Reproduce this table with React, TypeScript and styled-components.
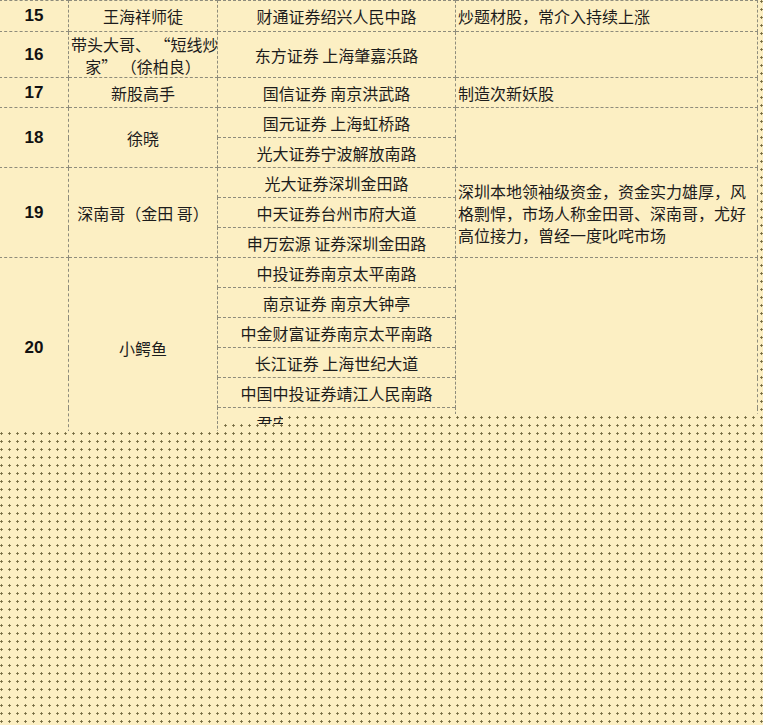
import styled, { createGlobalStyle } from "styled-components";

const cream = "#fcefc3";
const dots = `radial-gradient(circle at 1.5px 1.5px, #6f653c 0.9px, transparent 1.4px)`;

const GlobalStyle = createGlobalStyle`
  html, body {
    margin: 0;
    padding: 0;
  }
  body {
    background-color: ${cream};
    background-image: ${dots};
    background-size: 8px 8px;
    font-family: "Noto Sans CJK SC", "Noto Sans", sans-serif;
    color: #1c1c1c;
  }
`;

type Entry = {
  no: string;
  name: React.ReactNode;
  brokers: string[];
  note?: React.ReactNode;
  heights: number[];
};

const entries: Entry[] = [
  {
    no: "15",
    name: "王海祥师徒",
    brokers: ["财通证券绍兴人民中路"],
    note: "炒题材股，常介入持续上涨",
    heights: [31],
  },
  {
    no: "16",
    name: (
      <>
        带头大哥、 “短线炒
        <br />
        家” （徐柏良）
      </>
    ),
    brokers: ["东方证券 上海肇嘉浜路"],
    heights: [46],
  },
  {
    no: "17",
    name: "新股高手",
    brokers: ["国信证券 南京洪武路"],
    note: "制造次新妖股",
    heights: [30],
  },
  {
    no: "18",
    name: "徐晓",
    brokers: ["国元证券 上海虹桥路", "光大证券宁波解放南路"],
    heights: [30, 30],
  },
  {
    no: "19",
    name: "深南哥（金田 哥）",
    brokers: ["光大证券深圳金田路", "中天证券台州市府大道", "申万宏源 证券深圳金田路"],
    note: (
      <>
        深圳本地领袖级资金，资金实力雄厚，风
        <br />
        格剽悍，市场人称金田哥、深南哥，尤好
        <br />
        高位接力，曾经一度叱咤市场
      </>
    ),
    heights: [30, 30, 30],
  },
  {
    no: "20",
    name: "小鳄鱼",
    brokers: [
      "中投证券南京太平南路",
      "南京证券 南京大钟亭",
      "中金财富证券南京太平南路",
      "长江证券 上海世纪大道",
      "中国中投证券靖江人民南路",
      "君安证券南京中山北路",
    ],
    heights: [30, 30, 30, 30, 30, 30],
  },
];

export default function App() {
  return (
    <>
      <GlobalStyle />
      <Page>
        <TableClip>
          <Table>
            <colgroup>
              <col style={{ width: 69 }} />
              <col style={{ width: 149 }} />
              <col style={{ width: 238 }} />
              <col style={{ width: 302 }} />
            </colgroup>
            <tbody>
              {entries.map((e) =>
                e.brokers.map((b, i) => (
                  <Row key={e.no + i} style={{ height: e.heights[i] }}>
                    {i === 0 && (
                      <>
                        <NoCell rowSpan={e.brokers.length}>{e.no}</NoCell>
                        <NameCell rowSpan={e.brokers.length}>{e.name}</NameCell>
                      </>
                    )}
                    <BrokerCell>{b}</BrokerCell>
                    {i === 0 && <NoteCell rowSpan={e.brokers.length}>{e.note}</NoteCell>}
                  </Row>
                ))
              )}
            </tbody>
          </Table>
        </TableClip>
        <DotPatch $left={283} $top={414} />
        <DotPatch $left={219} $top={424} />
      </Page>
    </>
  );
}

const Page = styled.div`
  position: relative;
  width: 763px;
  height: 725px;
  overflow: hidden;
`;

const TableClip = styled.div`
  height: 431px;
  overflow: hidden;
`;

const Table = styled.table`
  border-collapse: collapse;
  table-layout: fixed;
  width: 758px;
  background: ${cream};
  margin-left: -1px;
  font-size: 16px;
  line-height: 22px;
`;

const Row = styled.tr``;

const Cell = styled.td`
  border: 1px dashed #8e8c7c;
  padding: 0 2px;
  vertical-align: middle;
  white-space: nowrap;
  overflow: hidden;
`;

const NoCell = styled(Cell)`
  text-align: center;
  font-family: "Liberation Sans", Arial, sans-serif;
  font-weight: 700;
  font-size: 17px;
  color: #111;
`;

const NameCell = styled(Cell)`
  text-align: center;
`;

const BrokerCell = styled(Cell)`
  text-align: center;
`;

const NoteCell = styled(Cell)`
  text-align: left;
  padding-left: 2px;
`;

const DotPatch = styled.div<{ $left: number; $top: number }>`
  position: absolute;
  left: ${(p) => p.$left}px;
  top: ${(p) => p.$top}px;
  right: 0;
  height: 40px;
  background-color: ${cream};
  background-image: ${dots};
  background-size: 8px 8px;
  background-position: ${(p) => -p.$left}px ${(p) => -p.$top}px;
`;
